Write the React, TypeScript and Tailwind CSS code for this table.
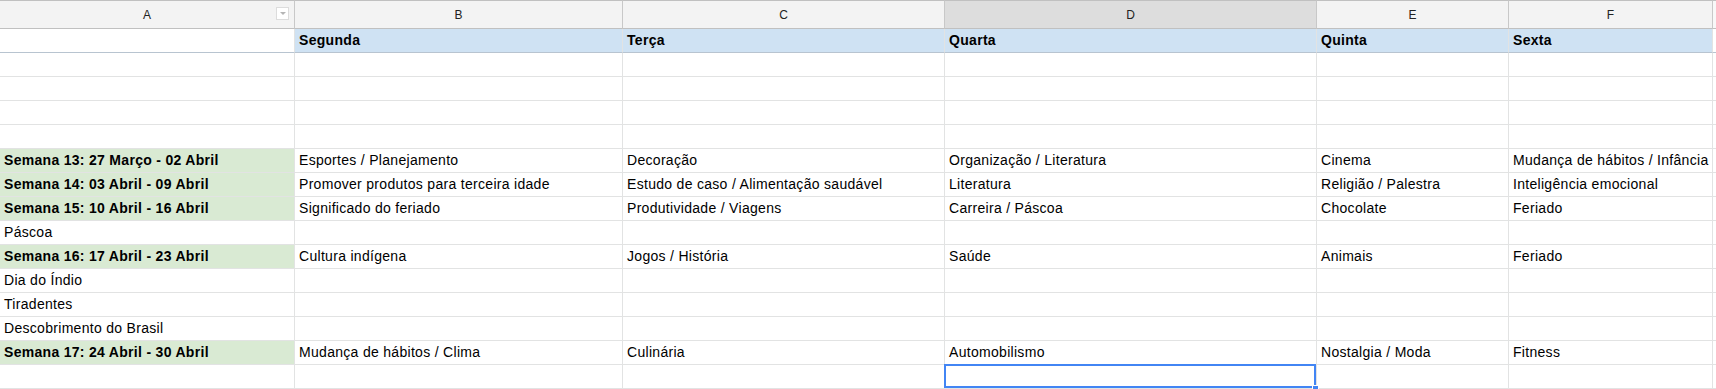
import React from "react";

type Row = { cells: string[]; kind: "week" | "plain" | "head" | "empty" | "select" };

const rows: Row[] = [
  { kind: "head", cells: ["", "Segunda", "Terça", "Quarta", "Quinta", "Sexta"] },
  { kind: "empty", cells: ["", "", "", "", "", ""] },
  { kind: "empty", cells: ["", "", "", "", "", ""] },
  { kind: "empty", cells: ["", "", "", "", "", ""] },
  { kind: "empty", cells: ["", "", "", "", "", ""] },
  {
    kind: "week",
    cells: [
      "Semana 13: 27 Março - 02 Abril",
      "Esportes / Planejamento",
      "Decoração",
      "Organização / Literatura",
      "Cinema",
      "Mudança de hábitos / Infância",
    ],
  },
  {
    kind: "week",
    cells: [
      "Semana 14: 03 Abril - 09 Abril",
      "Promover produtos para terceira idade",
      "Estudo de caso / Alimentação saudável",
      "Literatura",
      "Religião / Palestra",
      "Inteligência emocional",
    ],
  },
  {
    kind: "week",
    cells: [
      "Semana 15: 10 Abril - 16 Abril",
      "Significado do feriado",
      "Produtividade / Viagens",
      "Carreira / Páscoa",
      "Chocolate",
      "Feriado",
    ],
  },
  { kind: "plain", cells: ["Páscoa", "", "", "", "", ""] },
  {
    kind: "week",
    cells: [
      "Semana 16: 17 Abril - 23 Abril",
      "Cultura indígena",
      "Jogos / História",
      "Saúde",
      "Animais",
      "Feriado",
    ],
  },
  { kind: "plain", cells: ["Dia do Índio", "", "", "", "", ""] },
  { kind: "plain", cells: ["Tiradentes", "", "", "", "", ""] },
  { kind: "plain", cells: ["Descobrimento do Brasil", "", "", "", "", ""] },
  {
    kind: "week",
    cells: [
      "Semana 17: 24 Abril - 30 Abril",
      "Mudança de hábitos / Clima",
      "Culinária",
      "Automobilismo",
      "Nostalgia / Moda",
      "Fitness",
    ],
  },
  { kind: "select", cells: ["", "", "", "", "", ""] },
];

const letters = ["A", "B", "C", "D", "E", "F"];

function cellClass(row: Row, ci: number): string {
  let bg = "bg-white";
  let weight = "font-normal";
  let bottom = "border-b-[#e2e3e3]";
  let ov = "overflow-hidden";
  if (row.kind === "head") {
    bottom = "border-b-[#b8c4d0]";
    if (ci > 0) {
      bg = "bg-[#cfe2f3]";
      weight = "font-bold";
    }
  }
  if (row.kind === "week" && ci === 0) {
    bg = "bg-[#d9ead3]";
    weight = "font-bold";
  }
  if (row.kind === "select" && ci === 3) {
    ov = "overflow-visible z-10";
  }
  return `relative h-[24px] border-r border-b border-r-[#e2e3e3] ${bottom} ${bg} ${weight} ${ov} pl-[4px] pr-[2px] leading-[23px] whitespace-nowrap text-[14px] tracking-[0.3px] text-black`;
}

export default function App() {
  return (
    <div
      className="relative w-[1716px] h-[389px] bg-white overflow-hidden"
      style={{ fontFamily: '"Liberation Sans", Arial, sans-serif' }}
    >
      <div className="grid grid-cols-[295px_328px_322px_372px_192px_204px_3px]">
        {letters.map((l, i) => (
          <div
            key={l}
            className={`relative h-[29px] border-t border-b border-r border-t-[#c0c0c0] border-b-[#c0c0c0] border-r-[#c8c8c8] flex items-center justify-center text-[12px] text-[#222] ${
              i === 3 ? "bg-[#dddddd]" : "bg-[#f3f3f3]"
            }`}
          >
            {l}
            {i === 0 && (
              <div className="absolute left-[276px] top-[6px] w-[13px] h-[13px] bg-white border border-[#dcdcdc] flex items-center justify-center">
                <div className="w-0 h-0 border-l-[3px] border-r-[3px] border-t-[3px] border-l-transparent border-r-transparent border-t-[#b5b5b5]" />
              </div>
            )}
          </div>
        ))}
        <div className="h-[29px] border-t border-b border-t-[#c0c0c0] border-b-[#c0c0c0] bg-[#f8f8f8]" />

        {rows.map((row, ri) => (
          <React.Fragment key={ri}>
            {row.cells.map((c, ci) => (
              <div key={ci} className={cellClass(row, ci)}>
                {c}
                {row.kind === "select" && ci === 3 && (
                  <>
                    <div className="absolute left-[-1px] top-[-1px] right-[0px] bottom-[0px] border-2 border-[#4285f4]" />
                    <div className="absolute right-[-3px] bottom-[-4px] w-[7px] h-[7px] bg-[#4285f4] border border-white" />
                  </>
                )}
              </div>
            ))}
            <div
              className={`h-[24px] border-b ${
                row.kind === "head" ? "border-b-[#b8c4d0]" : "border-b-[#e2e3e3]"
              } bg-white`}
            />
          </React.Fragment>
        ))}
      </div>
    </div>
  );
}
